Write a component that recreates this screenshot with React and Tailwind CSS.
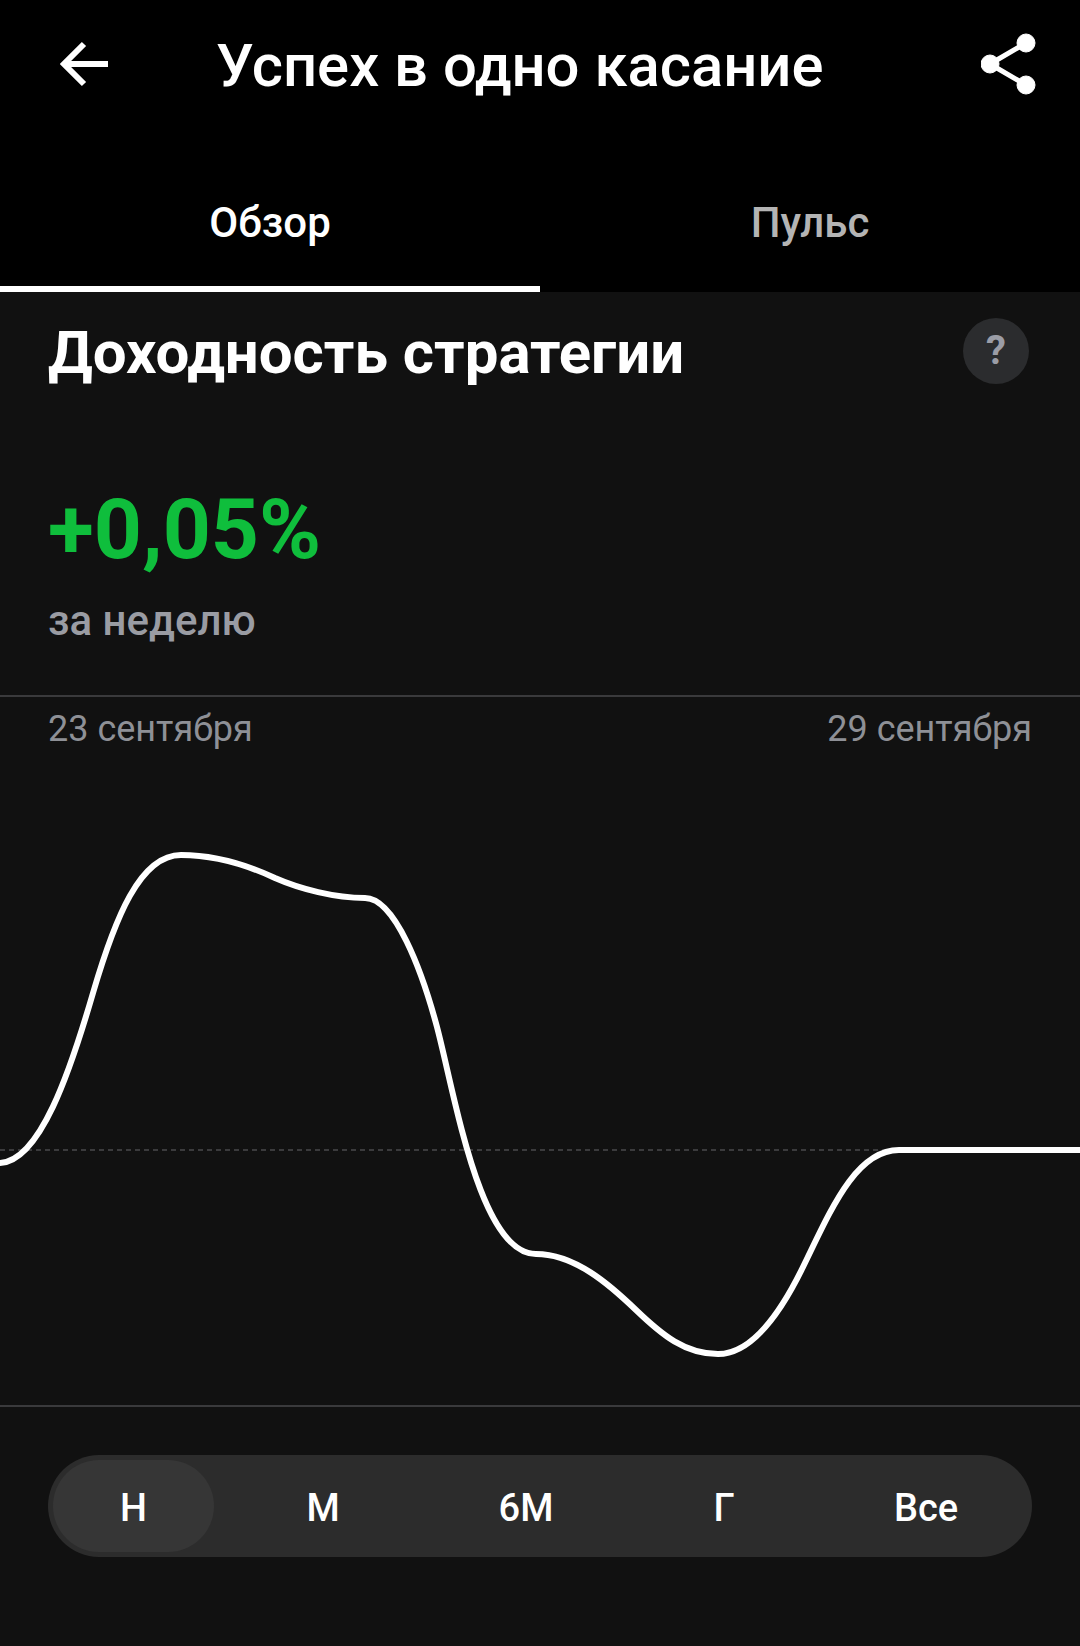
import { useState } from 'react';

const PERIODS = [
  { label: 'Н', width: 'w-[161px]' },
  { label: 'М', width: 'w-[218px]' },
  { label: '6М', width: 'w-[188px]' },
  { label: 'Г', width: 'w-[208px]' },
  { label: 'Все', width: 'w-[196px]' },
];

const CURVE =
  'M-4 401 L0 401 C40 399 70 310 93 231 C115 156 140 93 181 93 C215 93 245 102 275 116 C300 127 335 136 365 136 C395 136 422 209 437 265 C455 333 480 492 536 492 C575 492 610 523 636 548 C662 573 685 592 718 592 C755 592 785 542 803 505 C830 450 855 388 899 388 L1084 388';

function ArrowBack() {
  return (
    <svg viewBox="0 0 50 46" className="w-[50px] h-[46px] mb-[4px]" fill="none" stroke="white" strokeWidth="6">
      <path d="M48 23 H6" />
      <path d="M24 3 L4 23 L24 43" />
    </svg>
  );
}

function ShareIcon() {
  return (
    <svg viewBox="0 0 56 62" className="w-[56px] h-[62px] mb-[4px]" fill="white" stroke="white">
      <circle cx="9" cy="31" r="9" />
      <circle cx="45" cy="10" r="9" />
      <circle cx="45" cy="52" r="9" />
      <path d="M9 31 L45 10 M9 31 L45 52" strokeWidth="5" />
    </svg>
  );
}

export default function App() {
  const [period, setPeriod] = useState('Н');

  return (
    <div className="w-[1080px] h-[1646px] bg-[#111111] overflow-hidden font-['Roboto',sans-serif]">
      {/* header + tabs */}
      <div className="bg-black">
        <div className="h-[132px] pl-[60px] pr-[43px] flex items-center">
          <ArrowBack />
          <h1 className="ml-[106px] mt-[2px] text-[59.8px] leading-none font-medium text-white whitespace-nowrap">Успех в одно касание</h1>
          <div className="ml-auto"><ShareIcon /></div>
        </div>
        <div className="flex h-[160px]">
          <div className="w-[540px] pt-[26px] border-b-[6px] border-white flex items-center justify-center text-[42px] font-medium text-white">Обзор</div>
          <div className="w-[540px] pt-[26px] pb-[6px] flex items-center justify-center text-[42px] font-medium text-[#b4b4b4]">Пульс</div>
        </div>
      </div>

      {/* heading */}
      <div className="h-[112px] pt-[6px] pl-[48px] pr-[51px] flex items-center justify-between">
        <h2 className="mt-[4px] text-[60px] leading-none font-bold text-white whitespace-nowrap">Доходность стратегии</h2>
        <div className="w-[66px] h-[66px] rounded-full bg-[#2b2c2e] flex items-center justify-center text-[40px] font-bold text-[#9b9da6]">?</div>
      </div>

      <div className="pl-[48px] h-[291px] pt-[80px]">
        <p className="text-[84px] leading-[92px] font-bold text-[#0fbe3c]">+0,05%</p>
        <p className="mt-[21px] text-[42px] leading-[48px] font-medium text-[#9a9ca3]">за неделю</p>
      </div>

      {/* chart */}
      <div className="border-y-2 border-[#3a3a3c]">
        <div className="px-[48px] pt-[12px] h-[65px] flex justify-between text-[36px] leading-[40px] text-[#8e9096]">
          <span>23 сентября</span>
          <span>29 сентября</span>
        </div>
        <svg viewBox="0 0 1080 643" className="block w-[1080px] h-[643px]" fill="none">
          <line x1="0" y1="388" x2="1080" y2="388" stroke="#4a4a4c" strokeWidth="1.5" strokeDasharray="5 4" />
          <path d={CURVE} stroke="white" strokeWidth="6" />
        </svg>
      </div>

      {/* period switch */}
      <div className="px-[48px] pt-[48px]">
        <div className="h-[102px] w-[984px] rounded-[51px] bg-[#2c2c2c] flex p-[5px]">
          {PERIODS.map(p => (
            <button
              key={p.label}
              onClick={() => setPeriod(p.label)}
              className={`${p.width} shrink-0 pt-[4px] rounded-[46px] text-[38px] font-medium text-white ${period === p.label ? 'bg-[#363636]' : ''}`}
            >
              {p.label}
            </button>
          ))}
        </div>
      </div>
    </div>
  );
}
